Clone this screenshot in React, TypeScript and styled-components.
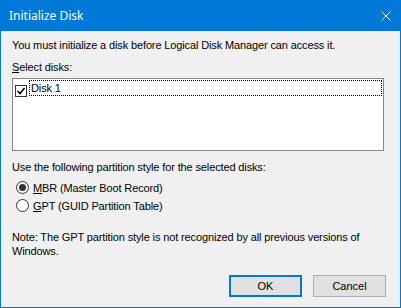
import React from "react";
import styled, { createGlobalStyle } from "styled-components";

const Global = createGlobalStyle`
  html, body { margin: 0; padding: 0; background: #ffffff; }
  * { box-sizing: border-box; }
`;

const Window = styled.div`
  width: 401px;
  height: 308px;
  border: 1px solid #0078d7;
  background: #f0f0f0;
  display: flex;
  flex-direction: column;
  font-family: "Liberation Sans", Arial, sans-serif;
  font-size: 11px;
  letter-spacing: -0.13px;
  color: #000;
`;

const TitleBar = styled.div`
  height: 30px;
  background: #0078d7;
  display: flex;
  align-items: center;
  justify-content: space-between;
  padding: 0 9px 0 8px;
  flex-shrink: 0;
`;

const Title = styled.span`
  font-family: "Noto Sans", "Open Sans", sans-serif;
  font-size: 12px;
  letter-spacing: 0;
  color: #ffffff;
  line-height: 16px;
`;

const CloseIcon = styled.svg`
  width: 10px;
  height: 10px;
  display: block;
`;

const Body = styled.div`
  flex: 1;
  display: flex;
  flex-direction: column;
  padding: 7px 14px 0 11px;
`;

const Text = styled.div<{ $mt?: number }>`
  line-height: 15px;
  margin-top: ${(p) => p.$mt ?? 0}px;
  white-space: nowrap;
`;

const NoteText = styled.div<{ $mt?: number }>`
  line-height: 14px;
  margin-top: ${(p) => p.$mt ?? 0}px;
`;

const Key = styled.span`
  text-decoration: underline;
  text-underline-offset: 1px;
`;

const ListBox = styled.div`
  margin-top: 3px;
  width: 372px;
  height: 73px;
  border: 1px solid #828790;
  background: #ffffff;
  padding: 1px 1px 0 2px;
`;

const ListRow = styled.div`
  display: flex;
  align-items: center;
  height: 16px;
`;

const CheckBox = styled.div`
  width: 12px;
  height: 12px;
  border: 1px solid #333333;
  background: #ffffff;
  margin-top: 6px;
  margin-right: 2px;
  display: flex;
  align-items: center;
  justify-content: center;
  flex-shrink: 0;
`;

const FocusLabel = styled.div`
  flex: 1;
  height: 16px;
  border: 1px dotted #000;
  line-height: 14px;
  padding-left: 1px;
`;

const RadioGroup = styled.div`
  display: flex;
  flex-direction: column;
  gap: 1px;
  margin-top: 4px;
`;

const RadioRow = styled.div`
  display: flex;
  align-items: center;
  height: 17px;
  padding-left: 4px;
`;

const Radio = styled.div<{ $checked?: boolean }>`
  width: 13px;
  height: 13px;
  border-radius: 50%;
  border: 1px solid #333333;
  background: #ffffff;
  margin-right: 4px;
  display: flex;
  align-items: center;
  justify-content: center;
  flex-shrink: 0;
  &::after {
    content: "";
    display: ${(p) => (p.$checked ? "block" : "none")};
    width: 7px;
    height: 7px;
    border-radius: 50%;
    background: #333333;
  }
`;

const ButtonRow = styled.div`
  display: flex;
  justify-content: flex-end;
  gap: 11px;
  margin-top: 17px;
`;

const Button = styled.button<{ $default?: boolean }>`
  width: 73px;
  height: 22px;
  background: #e1e1e1;
  border: ${(p) => (p.$default ? "2px solid #0078d7" : "1px solid #adadad")};
  font-family: "Liberation Sans", Arial, sans-serif;
  font-size: 11px;
  color: #000;
  padding: 0;
  margin: 0;
  border-radius: 0;
`;

export default function App() {
  return (
    <>
      <Global />
      <Window>
        <TitleBar>
          <Title>Initialize Disk</Title>
          <CloseIcon viewBox="0 0 10 10">
            <path d="M0.5 0.5 L9.5 9.5 M9.5 0.5 L0.5 9.5" stroke="#ffffff" strokeWidth="1" fill="none" />
          </CloseIcon>
        </TitleBar>
        <Body>
          <Text>You must initialize a disk before Logical Disk Manager can access it.</Text>
          <Text $mt={7}>
            <Key>S</Key>elect disks:
          </Text>
          <ListBox>
            <ListRow>
              <CheckBox>
                <svg width="10" height="10" viewBox="0 0 10 10">
                  <path d="M1.5 5 L4 7.5 L8.5 2" stroke="#000" strokeWidth="1.6" fill="none" />
                </svg>
              </CheckBox>
              <FocusLabel>Disk 1</FocusLabel>
            </ListRow>
          </ListBox>
          <Text $mt={9}>Use the following partition style for the selected disks:</Text>
          <RadioGroup>
            <RadioRow>
              <Radio $checked />
              <span>
                <Key>M</Key>BR (Master Boot Record)
              </span>
            </RadioRow>
            <RadioRow>
              <Radio />
              <span>
                <Key>G</Key>PT (GUID Partition Table)
              </span>
            </RadioRow>
          </RadioGroup>
          <NoteText $mt={16}>
            Note: The GPT partition style is not recognized by all previous versions of Windows.
          </NoteText>
          <ButtonRow>
            <Button $default>OK</Button>
            <Button>Cancel</Button>
          </ButtonRow>
        </Body>
      </Window>
    </>
  );
}
